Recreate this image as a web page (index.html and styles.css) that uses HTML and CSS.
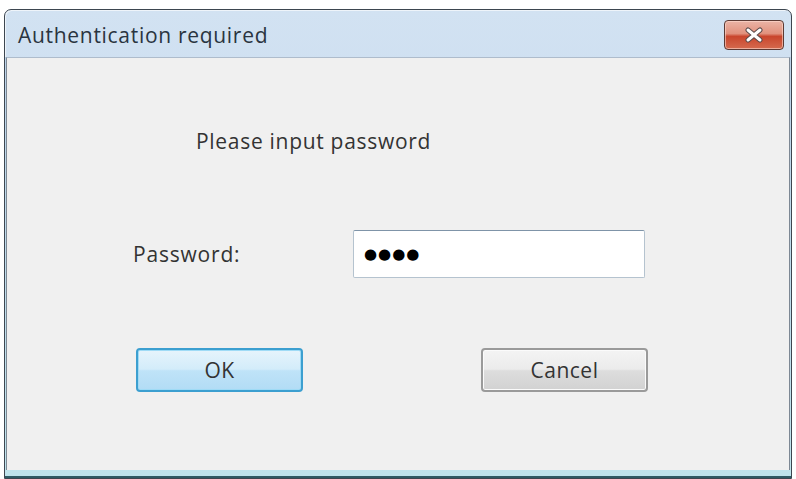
FILE: index.html
```html
<!DOCTYPE html>
<html>
<head>
<meta charset="utf-8">
<link rel="stylesheet" href="styles.css">
</head>
<body>
<div class="window">
  <div class="titlebar">
    <span class="title">Authentication required</span>
    <button class="close" aria-label="Close">
      <svg width="22" height="16" viewBox="0 0 22 16">
        <path d="M5 3 L17 13 M17 3 L5 13" stroke="#5a4a4a" stroke-width="5" stroke-linecap="round"/>
        <path d="M5 3 L17 13 M17 3 L5 13" stroke="#ffffff" stroke-width="3" stroke-linecap="round"/>
      </svg>
    </button>
  </div>
  <div class="frame">
    <div class="client">
      <div class="prompt">Please input password</div>
      <div class="field-row">
        <label class="label">Password:</label>
        <div class="input"><span class="dots">●●●●</span></div>
      </div>
      <div class="buttons">
        <button class="btn btn-ok">OK</button>
        <button class="btn btn-cancel">Cancel</button>
      </div>
    </div>
  </div>
</div>
</body>
</html>
```

FILE: styles.css
```css
html, body {
  margin: 0;
  padding: 0;
  background: #ffffff;
}
body {
  font-family: "Open Sans", "Noto Sans", "DejaVu Sans", sans-serif;
  color: #333;
}
.window {
  margin: 9px 4px 0 4px;
  width: 786px;
  height: 468px;
  border: 1px solid #3d4650;
  border-radius: 7px 7px 0 0;
  background: linear-gradient(#d2e2f2, #bcd3ea);
  display: flex;
  flex-direction: column;
  box-shadow: inset 1px 1px 0 #eef4fa;
}
.titlebar {
  height: 47px;
  display: flex;
  align-items: center;
  justify-content: space-between;
  padding: 0 7px 0 13px;
}
.title {
  font-size: 21px;
  letter-spacing: 0.7px;
  color: #2a3440;
  margin-top: 3px;
}
.close {
  width: 60px;
  height: 30px;
  margin-top: 2px;
  border: 1px solid #5c3a34;
  border-radius: 4px;
  background: linear-gradient(#eab4a6 0%, #e1917d 45%, #c9462d 55%, #d56a4e 100%);
  box-shadow: inset 0 0 0 1px rgba(255,220,210,0.6);
  display: flex;
  align-items: center;
  justify-content: center;
  padding: 0;
}
.frame {
  flex: 1;
  padding: 0 1px 6px 1px;
  background: linear-gradient(#bcd3ea, #bfe4ec);
  display: flex;
  border-bottom: 2px solid #2f5a64;
}
.client {
  flex: 1;
  background: #f0f0f0;
  border-top: 1px solid #aebccc;
  border-left: 1px solid #7d8894;
  border-right: 1px solid #7d8894;
  display: flex;
  flex-direction: column;
}
.prompt {
  font-size: 21px;
  letter-spacing: 0.7px;
  line-height: 24px;
  margin: 71px 0 0 189px;
  color: #333;
}
.field-row {
  display: flex;
  align-items: center;
  margin-top: 77px;
  padding-left: 126px;
}
.label {
  font-size: 21px;
  letter-spacing: 0.8px;
  width: 220px;
  color: #333;
}
.input {
  box-sizing: border-box;
  width: 292px;
  height: 48px;
  border: 1px solid #b5c3cf;
  border-top-color: #7f94a8;
  border-radius: 2px;
  background: #ffffff;
  display: flex;
  align-items: center;
  padding-left: 10px;
}
.dots {
  font-family: "DejaVu Sans", sans-serif;
  font-size: 15px;
  letter-spacing: 1px;
  color: #000;
}
.buttons {
  display: flex;
  margin-top: 70px;
  padding-left: 129px;
  gap: 178px;
}
.btn {
  width: 167px;
  height: 44px;
  font-family: "Open Sans", "Noto Sans", sans-serif;
  font-size: 21px;
  letter-spacing: 0.5px;
  color: #333;
  border-radius: 4px;
  padding: 0;
}
.btn-ok {
  border: 2px solid #3c9fd0;
  background: linear-gradient(#e6f4fc 0%, #d3ecfa 48%, #bfe3f8 52%, #b2dcf5 100%);
  box-shadow: inset 0 0 0 1px #9fdbf6;
}
.btn-cancel {
  border: 2px solid #9a9a9a;
  background: linear-gradient(#f4f4f4 0%, #ebebeb 48%, #dddddd 52%, #d2d2d2 100%);
  box-shadow: inset 0 0 0 1px #fbfbfb;
}
```
